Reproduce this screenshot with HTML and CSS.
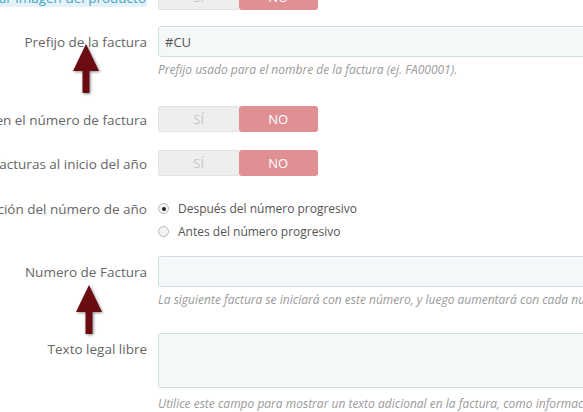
FILE: index.html
```html
<!DOCTYPE html>
<html lang="es">
<head>
    <meta charset="UTF-8">
    <title>Opciones de factura</title>
    <link rel="stylesheet" href="styles.css">
</head>
<body>
    <form class="invoice-form">
        <div class="row row-switch row-image">
            <label class="control-label"><span class="highlight">Mostrar imagen del producto</span></label>
            <div class="switch">
                <span class="switch-off">SÍ</span>
                <span class="switch-on">NO</span>
            </div>
        </div>

        <div class="row row-prefix">
            <label class="control-label">Prefijo de la factura</label>
            <div class="field">
                <input type="text" class="text-input" value="#CU">
                <p class="help">Prefijo usado para el nombre de la factura (ej. FA00001).</p>
            </div>
        </div>

        <div class="row row-switch">
            <label class="control-label">Añadir el año actual en el número de factura</label>
            <div class="switch">
                <span class="switch-off">SÍ</span>
                <span class="switch-on">NO</span>
            </div>
        </div>

        <div class="row row-switch row-reset">
            <label class="control-label">Reiniciar la secuencia de facturas al inicio del año</label>
            <div class="switch">
                <span class="switch-off">SÍ</span>
                <span class="switch-on">NO</span>
            </div>
        </div>

        <div class="row row-radio">
            <label class="control-label">Posición del número de año</label>
            <div class="field">
                <label class="radio"><span class="radio-dot checked"></span>Después del número progresivo</label>
                <label class="radio"><span class="radio-dot"></span>Antes del número progresivo</label>
            </div>
        </div>

        <div class="row row-number">
            <label class="control-label">Numero de Factura</label>
            <div class="field">
                <input type="text" class="text-input">
                <p class="help">La siguiente factura se iniciará con este número, y luego aumentará con cada nueva factura.</p>
            </div>
        </div>

        <div class="row row-legal">
            <label class="control-label">Texto legal libre</label>
            <div class="field">
                <textarea class="text-area"></textarea>
                <p class="help">Utilice este campo para mostrar un texto adicional en la factura, como información legal.</p>
            </div>
        </div>
    </form>

    <svg class="arrow arrow-prefix" width="28" height="50" viewBox="0 0 28 50">
        <path d="M14 0 L27 27 L17.5 27 L17.5 49 L10.5 49 L10.5 27 L1 27 Z" fill="#6a0c12"/>
    </svg>
    <svg class="arrow arrow-number" width="28" height="50" viewBox="0 0 28 50">
        <path d="M14 0 L27 27 L17.5 27 L17.5 49 L10.5 49 L10.5 27 L1 27 Z" fill="#6a0c12"/>
    </svg>
</body>
</html>
```

FILE: styles.css
```css
body {
    margin: 0;
    font-family: 'Open Sans', sans-serif;
    font-size: 13px;
    color: #666;
    background: #fff;
    overflow: hidden;
    position: relative;
    height: 412px;
}
.invoice-form {
    display: flex;
    flex-direction: column;
    margin-top: -16px;
}
.row {
    display: flex;
    align-items: flex-start;
    gap: 11px;
    margin-bottom: 18px;
}
.row-image {
    margin-bottom: 16px;
}
.row-reset {
    margin-bottom: 21px;
}
.row-radio {
    margin-bottom: 13px;
}
.row-number {
    margin-bottom: 15px;
}
.control-label {
    width: 147px;
    flex: none;
    display: flex;
    justify-content: flex-end;
    white-space: nowrap;
    font-size: 13.5px;
    line-height: 18px;
    padding-top: 7px;
}
.row-switch .control-label {
    padding-top: 5px;
}
.row-radio .control-label {
    padding-top: 3px;
}
.highlight {
    background: #e3f3f9;
    color: #4aa3c4;
    padding-right: 1px;
}
.field {
    flex: none;
    width: 440px;
}
.text-input {
    display: block;
    box-sizing: border-box;
    width: 100%;
    height: 31px;
    margin: 0;
    padding: 0 6px;
    border: 1px solid #cfdde1;
    border-radius: 3px;
    background: #f5f8f9;
    font-family: inherit;
    font-size: 13px;
    color: #555;
}
.text-area {
    display: block;
    box-sizing: border-box;
    width: 100%;
    height: 55px;
    margin: 0;
    border: 1px solid #cfdde1;
    border-radius: 3px;
    background: #f5f8f9;
    resize: none;
}
.help {
    margin: 5px 0 10px;
    font-size: 12px;
    line-height: 16px;
    font-style: italic;
    color: #9a9a9a;
    white-space: nowrap;
}
.row-legal .help {
    margin-top: 8px;
}
.switch {
    display: flex;
    width: 160px;
    height: 26px;
}
.switch span {
    flex: 1;
    display: flex;
    align-items: center;
    justify-content: center;
    font-size: 13px;
}
.switch-off {
    background: #eee;
    border: 1px solid #e2e2e2;
    border-right: none;
    border-radius: 3px 0 0 3px;
    color: #c8c8c8;
}
.switch-on {
    background: #e08f95;
    border-radius: 3px;
    color: #fff;
}
.radio {
    display: flex;
    align-items: center;
    height: 23px;
    font-size: 12px;
    color: #555;
}
.radio-dot {
    box-sizing: border-box;
    width: 11px;
    height: 11px;
    margin: 0 9px 0 0;
    border: 1px solid #b8b8b8;
    border-radius: 50%;
    background: #f3f3f3;
    display: flex;
    align-items: center;
    justify-content: center;
}
.radio-dot.checked::after {
    content: '';
    width: 4px;
    height: 4px;
    border-radius: 50%;
    background: #222;
}
.arrow {
    position: absolute;
    filter: drop-shadow(1px 1px 1.5px rgba(0, 0, 0, 0.45));
}
.arrow-prefix {
    left: 72px;
    top: 44px;
}
.arrow-number {
    left: 75px;
    top: 285px;
}
```
